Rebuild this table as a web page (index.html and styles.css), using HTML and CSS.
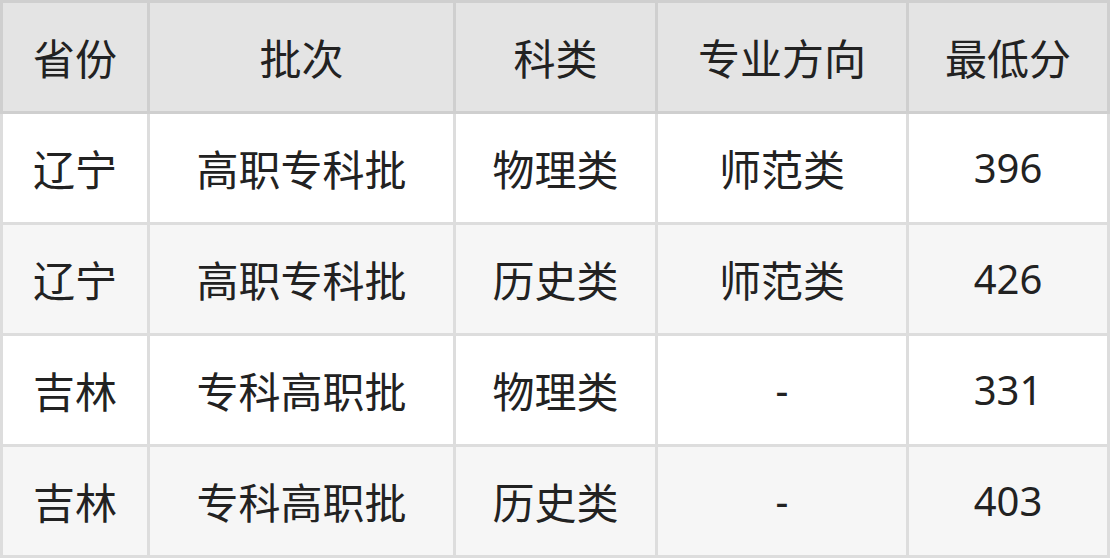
FILE: index.html
```html
<!DOCTYPE html>
<html lang="zh">
<head>
<meta charset="utf-8">
<link rel="stylesheet" href="styles.css">
</head>
<body>
<div class="table">
  <div class="row head">
    <div class="cell">省份</div>
    <div class="cell">批次</div>
    <div class="cell">科类</div>
    <div class="cell">专业方向</div>
    <div class="cell">最低分</div>
  </div>
  <div class="body">
    <div class="cell">辽宁</div>
    <div class="cell">高职专科批</div>
    <div class="cell">物理类</div>
    <div class="cell">师范类</div>
    <div class="cell num">396</div>

    <div class="cell alt">辽宁</div>
    <div class="cell alt">高职专科批</div>
    <div class="cell alt">历史类</div>
    <div class="cell alt">师范类</div>
    <div class="cell alt num">426</div>

    <div class="cell">吉林</div>
    <div class="cell">专科高职批</div>
    <div class="cell">物理类</div>
    <div class="cell num">-</div>
    <div class="cell num">331</div>

    <div class="cell alt">吉林</div>
    <div class="cell alt">专科高职批</div>
    <div class="cell alt">历史类</div>
    <div class="cell alt num">-</div>
    <div class="cell alt num">403</div>
  </div>
</div>
</body>
</html>
```

FILE: styles.css
```css
html, body {
  margin: 0;
  padding: 0;
  background: #ffffff;
}

.table {
  width: 1110px;
  font-family: "Noto Sans CJK SC", "Noto Sans", sans-serif;
  font-size: 42px;
  color: #222222;
}

.row,
.body {
  display: grid;
  grid-template-columns: 144px 303px 199px 248px 198px;
  column-gap: 3px;
}

.head {
  background: #cfcfcf;
  padding: 3px;
  grid-template-rows: 108px;
}

.head .cell {
  background: #e4e4e4;
}

.body {
  background: #dddddd;
  padding: 0 3px 3px;
  row-gap: 3px;
  grid-template-rows: repeat(4, 108px);
}

.cell {
  display: flex;
  align-items: center;
  justify-content: center;
  background: #ffffff;
  line-height: 1;
  white-space: nowrap;
}

.cell.num {
  font-family: "Noto Sans", sans-serif;
  font-size: 40px;
}

.cell.alt {
  background: #f6f6f6;
}
```
